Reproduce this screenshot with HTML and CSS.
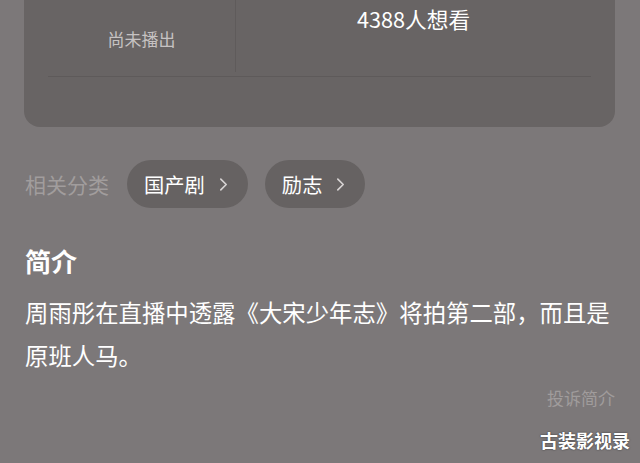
FILE: index.html
```html
<!DOCTYPE html>
<html lang="zh-CN">

<head>
    <meta charset="UTF-8">
    <title>简介</title>
    <link rel="stylesheet" href="styles.css">
</head>

<body>
    <div class="page">
        <div class="card">
            <div class="stats">
                <div class="stat stat-left">
                    <span class="stat-sub">尚未播出</span>
                </div>
                <div class="stat stat-right">
                    <span class="stat-main">4388人想看</span>
                </div>
            </div>
            <div class="card-line"></div>
            <div class="card-foot"></div>
        </div>

        <div class="tags">
            <span class="tags-label">相关分类</span>
            <a class="pill" href="#">国产剧
                <svg class="chev" viewBox="0 0 10 16" width="9" height="15"><path d="M2 2 L8 8 L2 14" fill="none" stroke="#d8d4d4" stroke-width="1.8" stroke-linecap="round" stroke-linejoin="round"/></svg>
            </a>
            <a class="pill" href="#">励志
                <svg class="chev" viewBox="0 0 10 16" width="9" height="15"><path d="M2 2 L8 8 L2 14" fill="none" stroke="#d8d4d4" stroke-width="1.8" stroke-linecap="round" stroke-linejoin="round"/></svg>
            </a>
        </div>

        <h2 class="intro-title">简介</h2>
        <p class="intro-text">周雨彤在直播中透露《大宋少年志》将拍第二部，而且是原班人马。</p>
        <div class="report">投诉简介</div>
    </div>
    <div class="watermark">古装影视录</div>
</body>

</html>
```

FILE: styles.css
```css
body {
    margin: 0;
    background: #7c7879;
    font-family: "Noto Sans CJK SC", "Noto Sans", sans-serif;
    color: #ffffff;
    width: 640px;
    height: 463px;
    overflow: hidden;
    position: relative;
}

.page {
    padding: 0 25px 0 25px;
}

.card {
    margin-left: -1px;
    height: 127px;
    background: #686464;
    border-radius: 0 0 16px 16px;
    padding: 0 24px;
    box-sizing: border-box;
}

.stats {
    display: flex;
    height: 72px;
}

.stat {
    display: flex;
    justify-content: center;
}

.stat-left {
    width: 188px;
    border-right: 1px solid #5f5b5b;
    padding-top: 27px;
    box-sizing: border-box;
}

.stat-right {
    flex: 1;
    padding-top: 4px;
}

.stat-sub {
    font-size: 17px;
    line-height: 24px;
    color: #c6c2c2;
}

.stat-main {
    font-size: 21.7px;
    line-height: 30px;
    color: #ffffff;
}

.card-line {
    margin-top: 4px;
    height: 1px;
    background: #5e5a5a;
}

.tags {
    display: flex;
    align-items: center;
    margin-top: 33px;
    gap: 17px;
}

.tags-label {
    font-size: 21px;
    color: #a19d9d;
    margin-right: 1px;
}

.pill {
    display: flex;
    align-items: center;
    gap: 14px;
    height: 48px;
    padding: 0 20px 0 17px;
    border-radius: 24px;
    background: #666262;
    color: #ffffff;
    font-size: 20.3px;
    text-decoration: none;
}

.chev {
    margin-top: 1px;
}

.intro-title {
    margin: 36px 0 0 0;
    font-size: 26px;
    line-height: 34px;
    font-weight: bold;
}

.intro-text {
    margin: 13px 0 0 0;
    font-size: 23.4px;
    line-height: 43px;
}

.report {
    text-align: right;
    margin-top: 8px;
    font-size: 17px;
    line-height: 25px;
    color: #a09c9c;
}

.watermark {
    position: absolute;
    right: 10px;
    bottom: 10px;
    font-size: 18px;
    font-weight: bold;
    color: #ffffff;
    text-shadow: 0 0 2px rgba(0, 0, 0, 0.6);
}
```
